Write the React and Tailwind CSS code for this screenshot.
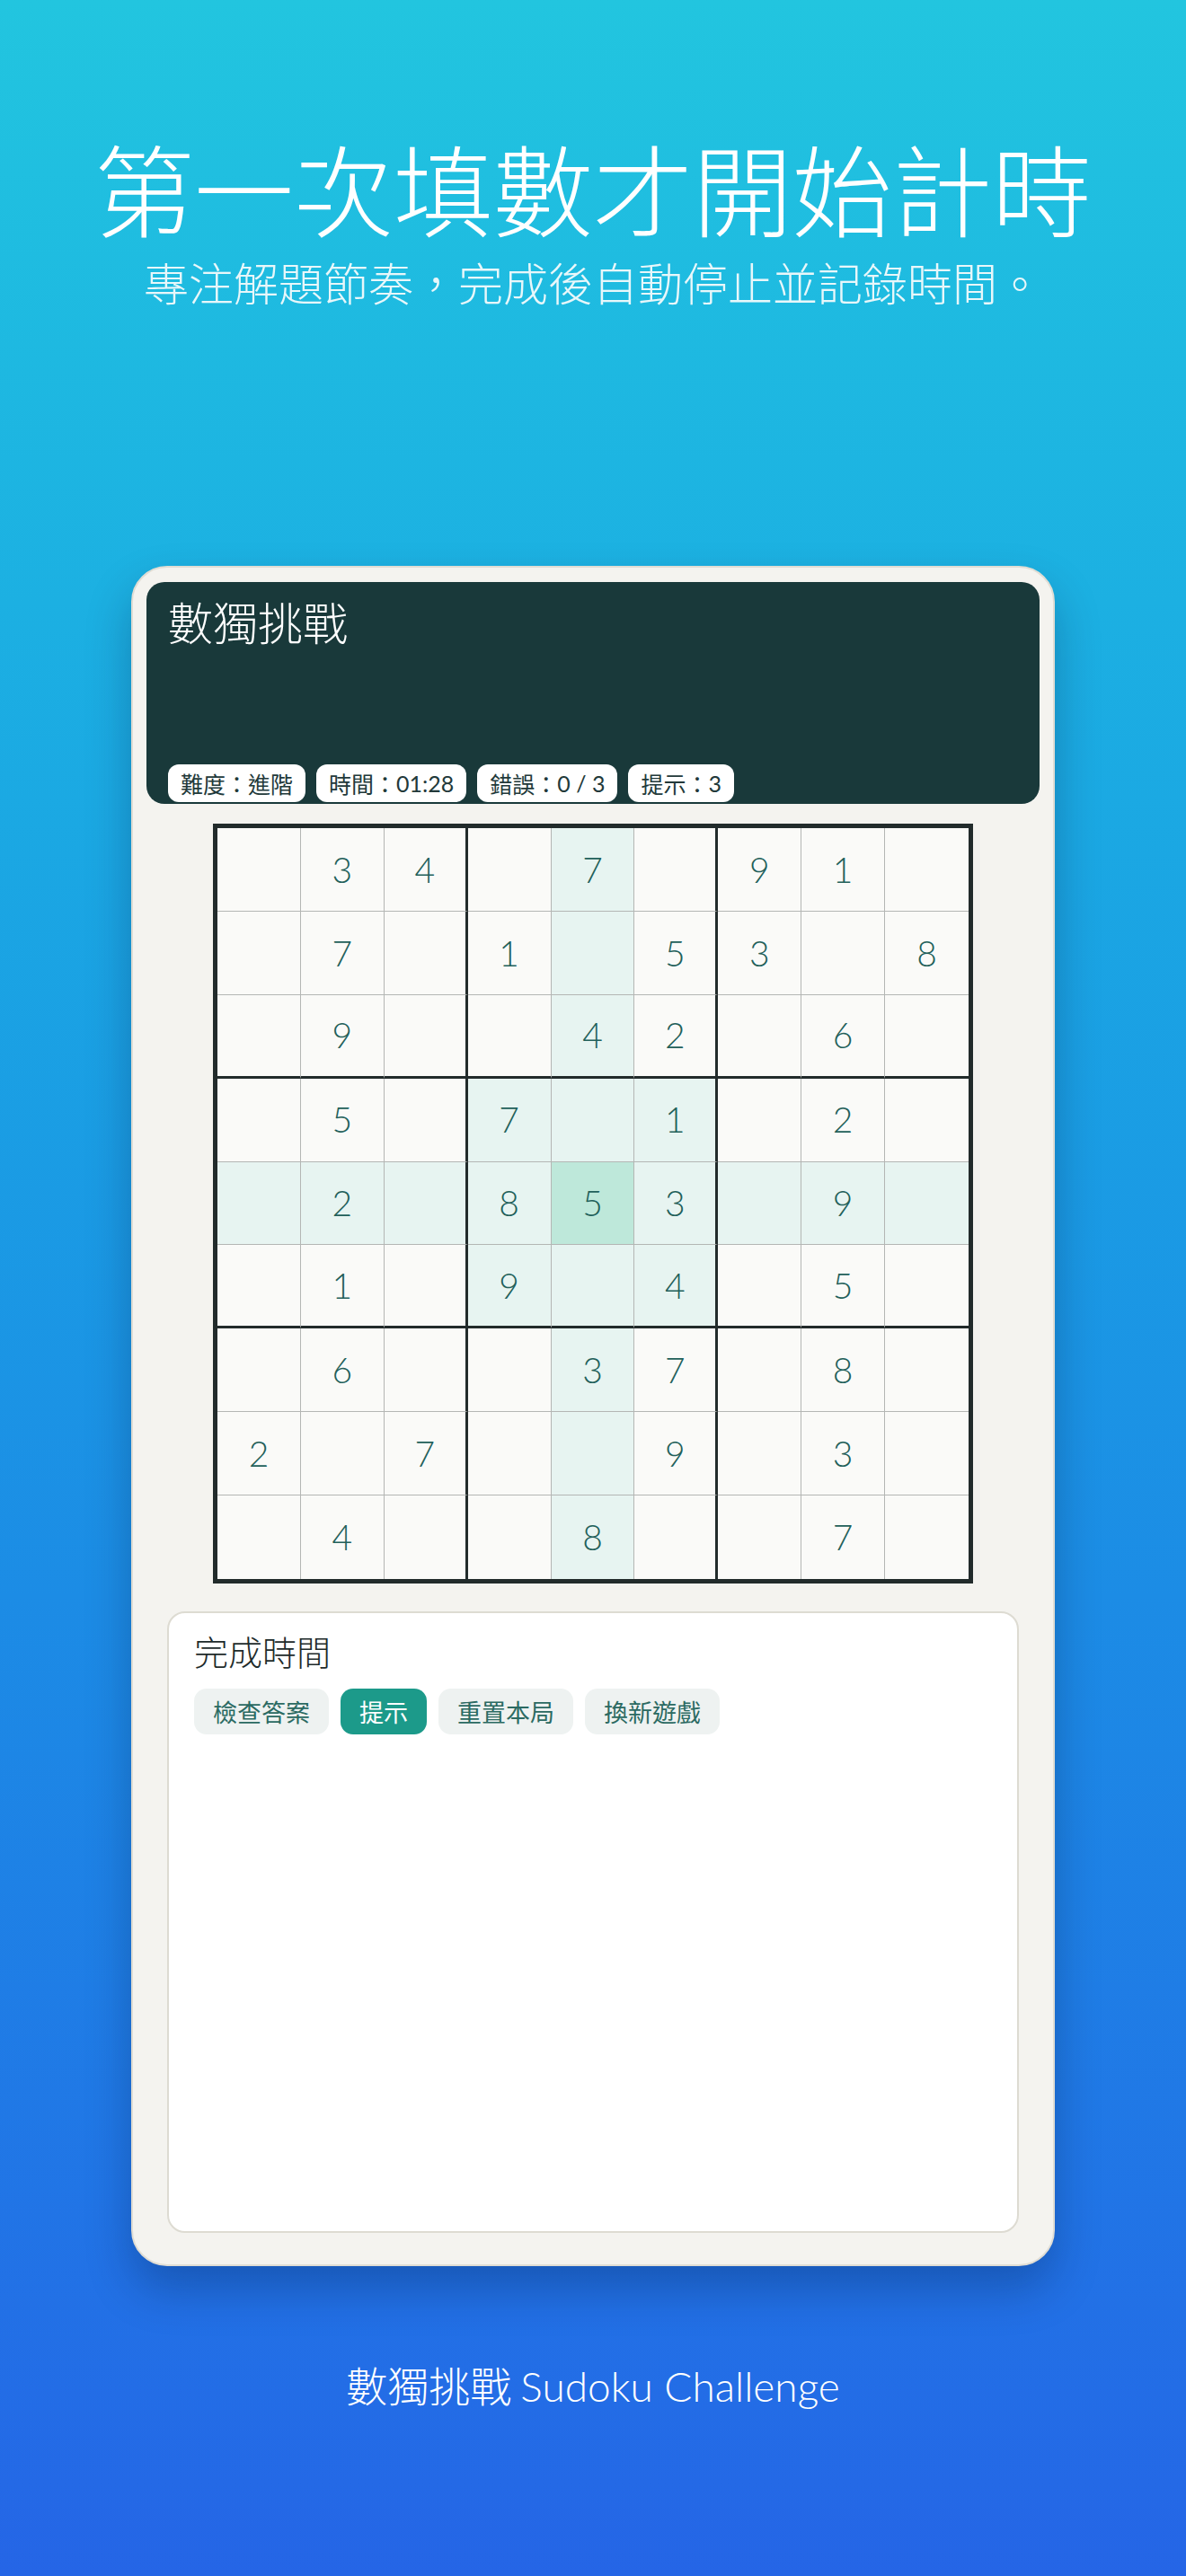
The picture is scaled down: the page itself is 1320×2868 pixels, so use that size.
const FONT_CJK = { fontFamily: '"Noto Sans CJK TC", "Noto Sans", sans-serif' };
const FONT_NUM = { fontFamily: 'Lato, "Noto Sans CJK TC", sans-serif' };

const BOARD = [
  [0, 3, 4, 0, 7, 0, 9, 1, 0],
  [0, 7, 0, 1, 0, 5, 3, 0, 8],
  [0, 9, 0, 0, 4, 2, 0, 6, 0],
  [0, 5, 0, 7, 0, 1, 0, 2, 0],
  [0, 2, 0, 8, 5, 3, 0, 9, 0],
  [0, 1, 0, 9, 0, 4, 0, 5, 0],
  [0, 6, 0, 0, 3, 7, 0, 8, 0],
  [2, 0, 7, 0, 0, 9, 0, 3, 0],
  [0, 4, 0, 0, 8, 0, 0, 7, 0],
];

const SEL = { r: 4, c: 4 };

function cellClass(r, c) {
  const right =
    c === 8 ? '' : c === 2 || c === 5 ? 'border-r-[3px] border-r-[#222b2b]' : 'border-r border-r-[#b4b6b4]';
  const bottom =
    r === 8 ? '' : r === 2 || r === 5 ? 'border-b-[3px] border-b-[#222b2b]' : 'border-b border-b-[#b4b6b4]';
  const sameBox = Math.floor(r / 3) === Math.floor(SEL.r / 3) && Math.floor(c / 3) === Math.floor(SEL.c / 3);
  let bg = 'bg-[#fafaf8]';
  if (r === SEL.r && c === SEL.c) bg = 'bg-[#bee8da]';
  else if (r === SEL.r || c === SEL.c || sameBox) bg = 'bg-[#e7f4f1]';
  return `${right} ${bottom} ${bg}`;
}

function Chip({ children }) {
  return (
    <div className="h-[42px] px-[14px] rounded-[12px] bg-white flex items-center text-[25px] leading-none text-[#22393a]">
      {children}
    </div>
  );
}

function Btn({ children, active }) {
  return (
    <button
      className={`h-[51px] px-[21px] rounded-[14px] text-[27px] leading-none ${
        active ? 'bg-[#1c9a8a] text-white' : 'bg-[#eef2f1] text-[#2b6a62]'
      }`}
    >
      {children}
    </button>
  );
}

export default function App() {
  return (
    <div
      className="w-[1320px] h-[2868px] bg-gradient-to-b from-[#22c5df] to-[#2565e6] flex flex-col items-center"
      style={FONT_CJK}
    >
      <h1 className="mt-[152px] text-[111px] leading-none font-light text-white">第一次填數才開始計時</h1>
      <p className="mt-[25px] text-[50px] leading-none font-light text-[#e8f7fa]">
        專注解題節奏，完成後自動停止並記錄時間。
      </p>

      <div className="mt-[292px] w-[1028px] rounded-[40px] border-2 border-[#e0ddd4] bg-[#f4f3ef] px-[15px] pt-[16px] pb-[35px] shadow-[0_26px_50px_rgba(0,20,60,0.28)] flex flex-col items-center">
        {/* header */}
        <div className="w-full h-[247px] rounded-[20px] bg-[#19393a] pl-[24px] pt-[12px] pb-[2px] flex flex-col justify-between">
          <div className="text-[50px] leading-tight font-light text-white">數獨挑戰</div>
          <div className="flex gap-[12px]">
            <Chip>難度：進階</Chip>
            <Chip>
              時間：<span style={FONT_NUM}>01:28</span>
            </Chip>
            <Chip>
              錯誤：<span style={FONT_NUM}>0 / 3</span>
            </Chip>
            <Chip>
              提示：<span style={FONT_NUM}>3</span>
            </Chip>
          </div>
        </div>

        {/* board */}
        <div className="mt-[22px] w-[846px] h-[846px] border-[5px] border-[#222b2b]">
          <div className="grid grid-cols-9 grid-rows-9 w-full h-full">
            {BOARD.map((row, r) =>
              row.map((v, c) => (
                <div
                  key={`${r}-${c}`}
                  className={`flex items-center justify-center text-[39px] font-light text-[#22605a] ${cellClass(r, c)}`}
                  style={FONT_NUM}
                >
                  {v ? v : ''}
                </div>
              ))
            )}
          </div>
        </div>

        {/* result panel */}
        <div className="mt-[31px] w-[948px] h-[692px] rounded-[20px] border-2 border-[#dddbd2] bg-white px-[28px] pt-[18px]">
          <div className="text-[38px] leading-tight font-light text-[#1e2b2b]">完成時間</div>
          <div className="mt-[18px] flex gap-[13px]">
            <Btn>檢查答案</Btn>
            <Btn active>提示</Btn>
            <Btn>重置本局</Btn>
            <Btn>換新遊戲</Btn>
          </div>
        </div>
      </div>

      <div className="mt-[108px] text-[46px] leading-none font-light text-white">
        數獨挑戰 <span style={FONT_NUM}>Sudoku Challenge</span>
      </div>
    </div>
  );
}
